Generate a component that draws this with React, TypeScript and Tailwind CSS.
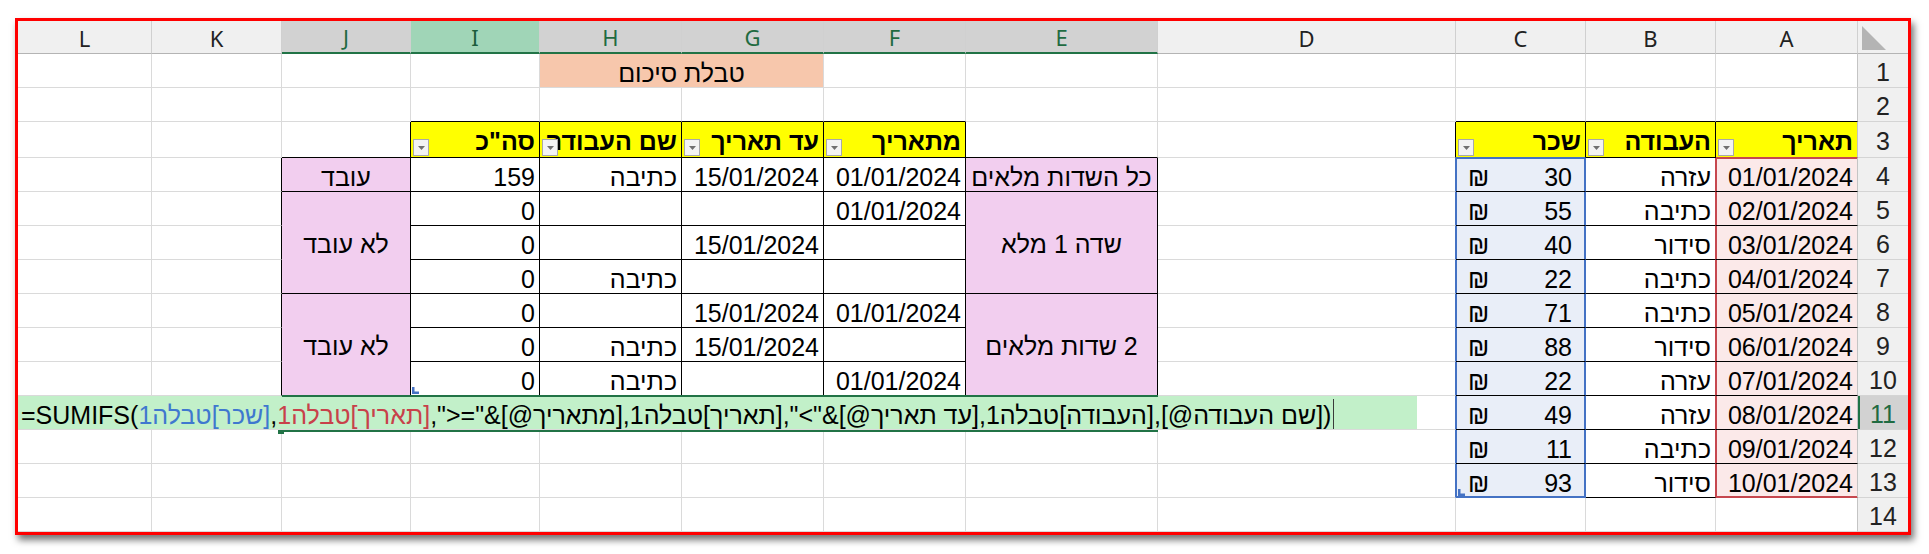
import type { FC, ReactNode } from 'react'

type Tone = 'gray' | 'black' | 'blue' | 'red' | 'edge'
type Zone = 'none' | 'table' | 'cbox' | 'abox'

type Spec = {
  t?: string
  fill?: string
  head?: boolean
  center?: boolean
  shekel?: boolean
  rows?: number
  cols?: number
}

const COLS = ['L', 'K', 'J', 'I', 'H', 'G', 'F', 'E', 'D', 'C', 'B', 'A']
const SELECTED = ['J', 'H', 'G', 'F', 'E']
const PINK = 'bg-[#f2ceef]'

const specs: Record<string, Spec> = {
  H1: { t: 'טבלת סיכום', fill: 'bg-[#f7c7ac]', center: true, cols: 2 },
  F3: { t: 'מתאריך', head: true },
  G3: { t: 'עד תאריך', head: true },
  H3: { t: 'שם העבודה', head: true },
  I3: { t: 'סה"כ', head: true },
  A3: { t: 'תאריך', head: true },
  B3: { t: 'העבודה', head: true },
  C3: { t: 'שכר', head: true },
  E4: { t: 'כל השדות מלאים', fill: PINK, center: true },
  F4: { t: '01/01/2024' },
  G4: { t: '15/01/2024' },
  H4: { t: 'כתיבה' },
  I4: { t: '159' },
  J4: { t: 'עובד', fill: PINK, center: true },
  E5: { t: 'שדה 1 מלא', fill: PINK, center: true, rows: 3 },
  F5: { t: '01/01/2024' },
  I5: { t: '0' },
  J5: { t: 'לא עובד', fill: PINK, center: true, rows: 3 },
  G6: { t: '15/01/2024' },
  I6: { t: '0' },
  H7: { t: 'כתיבה' },
  I7: { t: '0' },
  E8: { t: '2 שדות מלאים', fill: PINK, center: true, rows: 3 },
  F8: { t: '01/01/2024' },
  G8: { t: '15/01/2024' },
  I8: { t: '0' },
  J8: { t: 'לא עובד', fill: PINK, center: true, rows: 3 },
  G9: { t: '15/01/2024' },
  H9: { t: 'כתיבה' },
  I9: { t: '0' },
  F10: { t: '01/01/2024' },
  H10: { t: 'כתיבה' },
  I10: { t: '0' },
}

const pay: [string, string, string][] = [
  ['01/01/2024', 'עזרה', '30'],
  ['02/01/2024', 'כתיבה', '55'],
  ['03/01/2024', 'סידור', '40'],
  ['04/01/2024', 'כתיבה', '22'],
  ['05/01/2024', 'כתיבה', '71'],
  ['06/01/2024', 'סידור', '88'],
  ['07/01/2024', 'עזרה', '22'],
  ['08/01/2024', 'עזרה', '49'],
  ['09/01/2024', 'כתיבה', '11'],
  ['10/01/2024', 'סידור', '93'],
]
pay.forEach(([d, w, p], i) => {
  specs[`A${i + 4}`] = { t: d }
  specs[`B${i + 4}`] = { t: w }
  specs[`C${i + 4}`] = { t: p, shekel: true }
})

const key = (c: number, r: number) => `${COLS[c]}${r}`

const covered = new Set<string>()
Object.entries(specs).forEach(([k, s]) => {
  const c0 = COLS.indexOf(k[0])
  const r0 = Number(k.slice(1))
  for (let dc = 0; dc < (s.cols ?? 1); dc++)
    for (let dr = 0; dr < (s.rows ?? 1); dr++) if (dc || dr) covered.add(key(c0 + dc, r0 + dr))
})
for (let c = 1; c <= 8; c++) covered.add(key(c, 11))

const zone = (c: number, r: number): Zone => {
  const col = COLS[c]
  if (col === 'C' && r >= 4 && r <= 13) return 'cbox'
  if (col === 'A' && r >= 4 && r <= 13) return 'abox'
  if (
    (c >= 2 && c <= 7 && r >= 4 && r <= 10) ||
    (c >= 3 && c <= 6 && r === 3) ||
    (c >= 9 && c <= 11 && r >= 3 && r <= 13)
  )
    return 'table'
  return 'none'
}

const tone = (c1: number, r1: number, c2: number, r2: number): Tone => {
  if (c2 > 11) return 'edge'
  const a = zone(c1, r1)
  const b = zone(c2, r2)
  if ((a === 'cbox') !== (b === 'cbox')) return 'blue'
  if ((a === 'abox') !== (b === 'abox')) return 'red'
  if (a !== 'none' || b !== 'none') return 'black'
  return 'gray'
}

const R_CLS: Record<Tone, string> = {
  gray: 'border-r-[#dadada]',
  black: 'border-r-black',
  blue: 'border-r-[#4472c4]',
  red: 'border-r-[#c6474e]',
  edge: 'border-r-[#c4c4c4]',
}
const B_CLS: Record<Tone, string> = {
  gray: 'border-b-[#dadada]',
  black: 'border-b-black',
  blue: 'border-b-[#4472c4]',
  red: 'border-b-[#c6474e]',
  edge: 'border-b-[#c4c4c4]',
}

const boxShadow = (col: string, r: number) => {
  if (col === 'C') {
    if (r === 4) return 'shadow-[inset_1px_1px_0_#4472c4,inset_-1px_0_0_#4472c4]'
    if (r === 13) return 'shadow-[inset_1px_-1px_0_#4472c4,inset_-1px_0_0_#4472c4]'
    if (r > 4 && r < 13) return 'shadow-[inset_1px_0_0_#4472c4,inset_-1px_0_0_#4472c4]'
  }
  if (col === 'A') {
    if (r === 4) return 'shadow-[inset_1px_1px_0_#c6474e]'
    if (r === 13) return 'shadow-[inset_1px_-1px_0_#c6474e]'
    if (r > 4 && r < 13) return 'shadow-[inset_1px_0_0_#c6474e]'
  }
  return ''
}

const FilterButton: FC = () => (
  <div className="absolute bottom-[1px] left-[2px] flex h-[17px] w-[16px] items-center justify-center border border-[#a9a9a9] bg-[#f3f3f3]">
    <svg width="7" height="4" viewBox="0 0 7 4">
      <path d="M0 0h7L3.5 4z" fill="#707070" />
    </svg>
  </div>
)

const ResizeHandle: FC<{ left: string }> = ({ left }) => (
  <svg className={`absolute bottom-[1px] ${left}`} width="7" height="7" viewBox="0 0 7 7">
    <path d="M0 0h2.5v4.5H7V7H0z" fill="#4472c4" />
  </svg>
)

const Cell: FC<{ c: number; r: number }> = ({ c, r }) => {
  const k = key(c, r)
  const s = specs[k] ?? {}
  const cols = s.cols ?? 1
  const rows = s.rows ?? 1
  const z = zone(c, r)
  const right = R_CLS[tone(c + cols - 1, r, c + cols, r)]
  const bottom = B_CLS[tone(c, r + rows - 1, c, r + rows)]
  const fill =
    s.fill ?? (s.head ? 'bg-[#ffff00]' : z === 'cbox' ? 'bg-[#e9eef8]' : z === 'abox' ? 'bg-[#fbe9e9]' : 'bg-white')
  let align = 'items-end justify-end pr-[4px]'
  if (s.head) align = 'items-center justify-end pr-[4px] pt-[3px] font-bold'
  if (s.center) align = rows > 1 ? 'items-center justify-center pt-[3px]' : 'items-end justify-center'
  if (s.shekel) align = 'items-end justify-between pl-[12px] pr-[13px]'

  return (
    <div
      className={`relative flex overflow-hidden border-r border-b ${right} ${bottom} ${fill} ${align} ${boxShadow(
        COLS[c],
        r,
      )} ${cols === 2 ? 'col-span-2' : ''} ${rows === 3 ? 'row-span-3' : ''}`}
    >
      {s.shekel && <span>₪</span>}
      {s.t && (
        <span dir="rtl" className="whitespace-nowrap">
          {s.t}
        </span>
      )}
      {s.head && <FilterButton />}
      {k === 'I10' && <ResizeHandle left="left-[1px]" />}
      {k === 'C13' && <ResizeHandle left="left-[2px]" />}
    </div>
  )
}

const TOKENS: [string, 'k' | 'b' | 'r'][] = [
  ['=SUMIFS(', 'k'],
  ['טבלה1', 'b'],
  ['[שכר]', 'b'],
  [',', 'k'],
  ['טבלה1', 'r'],
  ['[תאריך]', 'r'],
  [',">="&', 'k'],
  ['[@מתאריך]', 'k'],
  [',', 'k'],
  ['טבלה1', 'k'],
  ['[תאריך]', 'k'],
  [',"<"&', 'k'],
  ['[@עד תאריך]', 'k'],
  [',', 'k'],
  ['טבלה1', 'k'],
  ['[העבודה]', 'k'],
  [',', 'k'],
  ['[@שם העבודה]', 'k'],
  [')', 'k'],
]
const TOKEN_CLS = { k: 'text-black', b: 'text-[#3f78cf]', r: 'text-[#c8414a]' }

const FormulaRow: FC = () => (
  <div className={`relative col-span-9 flex border-r border-b ${R_CLS.blue} ${B_CLS.gray}`}>
    <div className="flex h-full w-[1399px] items-end whitespace-pre bg-[#c2f0c9] pl-[3px]">
      {TOKENS.map(([t, c], i) => (
        <span key={i} dir="ltr" className={TOKEN_CLS[c]}>
          {t}
        </span>
      ))}
      <span className="ml-[2px] h-[30px] w-px bg-[#3a3a3a]" />
    </div>
    <div className="absolute -top-px left-[264px] z-10 h-[2px] w-[876px] bg-[#217346]" />
    <div className="absolute top-[34px] left-[264px] z-10 h-[2px] w-[876px] bg-[#217346]" />
    <div className="absolute top-[34px] left-[260px] z-10 h-[4px] w-[6px] bg-[#217346]" />
  </div>
)

const ColHeader: FC<{ col: string }> = ({ col }) => {
  const look =
    col === 'I'
      ? 'bg-[#a0d5b7] text-[#1b5e3b] border-b-2 border-b-[#217346]'
      : SELECTED.includes(col)
        ? 'bg-[#d2d2d2] text-[#1f6b41] border-b-2 border-b-[#217346]'
        : 'bg-[#f0f0f0] text-[#222] border-b border-b-[#b4b4b4]'
  return (
    <div className={`flex items-center justify-center border-r border-r-[#d0d0d0] pt-[1px] ${look}`}>{col}</div>
  )
}

const RowNum: FC<{ r: number }> = ({ r }) => (
  <div
    className={`flex items-center justify-center border-b border-b-[#d4d4d4] pt-[3px] ${
      r === 11 ? 'bg-[#d2d2d2] text-[#1f6b41] shadow-[inset_2px_0_0_#217346]' : 'bg-[#f0f0f0] text-[#222]'
    }`}
  >
    {r}
  </div>
)

export default function App() {
  const body: ReactNode[] = []
  for (let r = 1; r <= 14; r++) {
    for (let c = 0; c < COLS.length; c++) {
      const k = key(c, r)
      if (covered.has(k)) continue
      body.push(k === 'L11' ? <FormulaRow key={k} /> : <Cell key={k} c={c} r={r} />)
    }
    body.push(<RowNum key={`n${r}`} r={r} />)
  }

  return (
    <div className="h-[554px] w-[1929px] bg-white pt-[18px] pl-[15px]">
      <div className="w-fit border-[3px] border-[#ff0000] bg-white shadow-[3px_5px_7px_rgba(0,0,0,0.55)]">
        <div className="grid grid-cols-[134px_130px_129px_129px_142px_142px_142px_192px_298px_130px_130px_142px_50px] grid-rows-[33px_34px_34px_36px_34px_34px_34px_34px_34px_34px_34px_34px_34px_34px_34px] font-['Liberation_Sans',sans-serif] text-[25px] leading-[27px] text-black">
          {COLS.map((col) => (
            <div key={col} className="contents font-['Noto_Sans',sans-serif] text-[22px] leading-[30px]">
              <ColHeader col={col} />
            </div>
          ))}
          <div className="flex items-start border-b border-b-[#b4b4b4] bg-[#f0f0f0] pt-[5px] pl-[4px]">
            <svg width="24" height="24" viewBox="0 0 24 24">
              <path d="M0 0V24H24z" fill="#b4b4b4" />
            </svg>
          </div>
          {body.map((node, i) =>
            i >= 0 ? node : null,
          )}
        </div>
      </div>
    </div>
  )
}
